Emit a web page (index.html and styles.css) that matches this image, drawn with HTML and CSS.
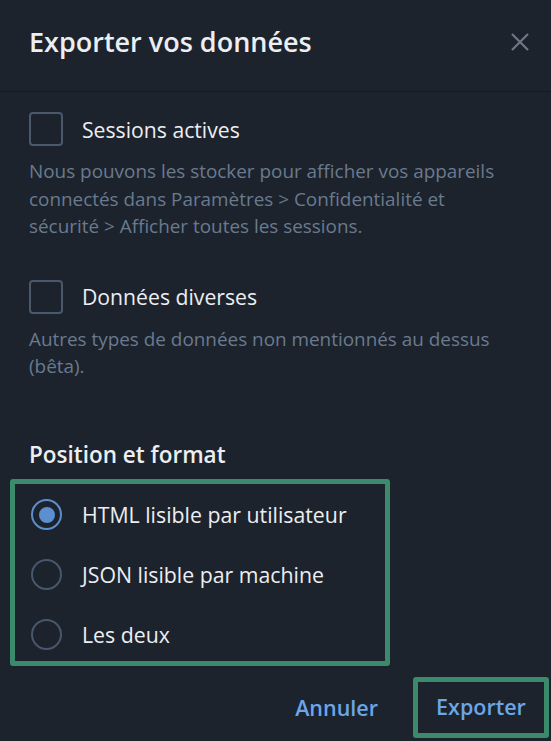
FILE: index.html
```html
<!DOCTYPE html>
<html lang="fr">
<head>
<meta charset="utf-8">
<title>Exporter vos données</title>
<link rel="stylesheet" href="styles.css">
</head>
<body>
<div class="dialog">
  <header class="header">
    <h1 class="title">Exporter vos données</h1>
    <button class="close" aria-label="Fermer">
      <svg width="20" height="20" viewBox="0 0 20 20"><path d="M2 2 L18 18 M18 2 L2 18" stroke="currentColor" stroke-width="2.2" stroke-linecap="butt" fill="none"/></svg>
    </button>
  </header>
  <main class="content">
    <section class="option">
      <label class="check-row"><span class="checkbox"></span><span class="check-label">Sessions actives</span></label>
      <p class="desc">Nous pouvons les stocker pour afficher vos appareils connectés dans Paramètres &gt; Confidentialité et sécurité &gt; Afficher toutes les sessions.</p>
    </section>
    <section class="option option-2">
      <label class="check-row"><span class="checkbox"></span><span class="check-label">Données diverses</span></label>
      <p class="desc">Autres types de données non mentionnés au dessus (bêta).</p>
    </section>
    <h2 class="section-title">Position et format</h2>
  </main>
  <div class="radio-group">
    <label class="radio-row"><span class="radio checked"></span><span class="radio-label">HTML lisible par utilisateur</span></label>
    <label class="radio-row"><span class="radio"></span><span class="radio-label">JSON lisible par machine</span></label>
    <label class="radio-row"><span class="radio"></span><span class="radio-label">Les deux</span></label>
  </div>
  <footer class="footer">
    <button class="btn">Annuler</button>
    <button class="btn btn-primary">Exporter</button>
  </footer>
</div>
</body>
</html>
```

FILE: styles.css
```css
* { box-sizing: border-box; }
html, body { margin: 0; padding: 0; }
body {
  background: #1c232d;
  font-family: "Open Sans", "Noto Sans", sans-serif;
  color: #e9ecef;
  width: 551px;
  height: 741px;
  overflow: hidden;
}
.dialog { display: flex; flex-direction: column; }
.header {
  height: 92px;
  display: flex;
  align-items: center;
  justify-content: space-between;
  padding: 0 21px 8px 29px;
  border-bottom: 1px solid #141a21;
}
.title {
  margin: 0;
  font-size: 27px;
  font-weight: 600;
  color: #eceef1;
  letter-spacing: 0;
}
.close {
  background: none;
  border: 0;
  padding: 0;
  color: #6d7886;
  display: flex;
  width: 20px;
  height: 20px;
}
.content { padding: 20px 29px 0; }
.option { display: flex; flex-direction: column; }
.option-2 { margin-top: 39px; }
.check-row { display: flex; align-items: center; gap: 19px; height: 34px; }
.checkbox {
  width: 34px; height: 34px;
  border: 2.5px solid #4a586b;
  border-radius: 4px;
  flex: none;
}
.check-label { font-size: 21.2px; color: #eceef1; }
.desc {
  margin: 12px 0 0;
  max-width: 480px;
  font-size: 18.9px;
  line-height: 27.5px;
  color: #6a7a8e;
}
.section-title {
  margin: 60px 0 0;
  font-size: 22.5px;
  line-height: 28px;
  font-weight: 600;
  color: #eceef1;
}
.radio-group {
  margin: 10px 0 0 10px;
  width: 380px;
  height: 187px;
  border: 5px solid #3a8a6b;
  border-radius: 3px;
  padding: 1px 0 0 16px;
  display: grid;
  grid-auto-rows: 60px;
}
.radio-row { display: flex; align-items: center; gap: 20px; }
.radio {
  width: 31px; height: 31px;
  border: 2.5px solid #48576b;
  border-radius: 50%;
  flex: none;
  display: flex; align-items: center; justify-content: center;
}
.radio.checked { border-color: #5b8fd0; }
.radio.checked::after {
  content: "";
  width: 16px; height: 16px;
  border-radius: 50%;
  background: #5b8fd0;
}
.radio-label { font-size: 21.3px; color: #eceef1; }
.footer {
  margin-top: 11px;
  display: flex;
  justify-content: flex-end;
  align-items: center;
  gap: 35px;
  padding-right: 2px;
}
.btn {
  background: none;
  border: 0;
  padding: 0;
  font-family: inherit;
  font-size: 21.5px;
  font-weight: 600;
  color: #6ca6e6;
}
.btn-primary {
  border: 5px solid #3a8a6b;
  border-radius: 3px;
  width: 136px;
  height: 61px;
  padding: 0 0 2px;
}
```
